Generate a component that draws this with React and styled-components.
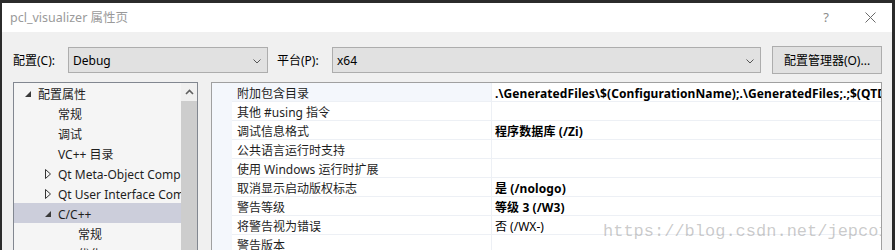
import React from "react";
import styled, { createGlobalStyle } from "styled-components";

const Global = createGlobalStyle`
  html, body { margin: 0; padding: 0; background: #2b2b2b; }
  body { font-family: "Noto Sans", "Noto Sans CJK SC", sans-serif; }
  * { box-sizing: border-box; }
`;

const Frame = styled.div`
  width: 895px;
  height: 250px;
  padding: 3px 3px 0 2px;
  background: #2b2b2b;
  overflow: hidden;
`;

const Window = styled.div`
  height: 247px;
  display: flex;
  flex-direction: column;
  background: #f0f0f0;
  overflow: hidden;
`;

const TitleBar = styled.div`
  flex: none;
  height: 29px;
  background: #fff;
  display: flex;
  align-items: center;
  padding-left: 8px;
`;

const TitleText = styled.div`
  font-size: 12.5px;
  line-height: 18px;
  padding-top: 1px;
  color: #9a9a9a;
  flex: 1;
  white-space: nowrap;
`;

const CaptionButton = styled.div`
  width: 44px;
  height: 29px;
  display: flex;
  align-items: center;
  justify-content: center;
  color: #8c8c8c;
  font-size: 13px;
  line-height: 13px;
`;

const Body = styled.div`
  flex: 1;
  min-height: 0;
  display: flex;
  flex-direction: column;
  padding: 14px 10px 0 11px;
`;

const ConfigRow = styled.div`
  flex: none;
  height: 28px;
  display: flex;
  align-items: center;
`;

const Label = styled.div`
  width: ${(p) => p.$w}px;
  margin-left: ${(p) => p.$ml || 0}px;
  padding-top: 2px;
  font-size: 12px;
  line-height: 16px;
  color: #000;
  white-space: nowrap;
`;

const Combo = styled.div`
  height: 26px;
  ${(p) => (p.$w ? `width: ${p.$w}px;` : "flex: 1;")}
  margin-right: ${(p) => p.$mr || 0}px;
  border: 1px solid #adadad;
  background: #e1e1e1;
  display: flex;
  align-items: center;
  padding: 2px 0 0 4px;
  font-size: 12px;
  line-height: 16px;
  color: #000;
`;

const Chevron = styled.svg`
  margin-left: auto;
  margin-right: 6px;
`;

const Button = styled.div`
  width: 110px;
  height: 28px;
  border: 1px solid #adadad;
  background: #e1e1e1;
  display: flex;
  align-items: center;
  justify-content: center;
  padding-top: 2px;
  font-size: 12px;
  line-height: 16px;
  color: #000;
  white-space: nowrap;
`;

const Main = styled.div`
  flex: none;
  margin-top: 8px;
  display: flex;
  gap: 13px;
  height: 220px;
`;

const Tree = styled.div`
  width: 185px;
  height: 220px;
  border: 1px solid #828790;
  background: #f5f5f5;
  display: flex;
`;

const TreeList = styled.div`
  flex: 1;
  min-width: 0;
  overflow: hidden;
`;

const TreeRow = styled.div`
  height: 20px;
  display: flex;
  align-items: center;
  padding-left: ${(p) => 11 + p.$level * 20}px;
  background: ${(p) => (p.$selected ? "#cccedb" : "transparent")};
  white-space: nowrap;
  font-size: 12px;
  line-height: 16px;
  color: #1e1e1e;
`;

const TreeText = styled.span`
  padding-top: 4px;
`;

const Expander = styled.div`
  width: 13px;
  flex: none;
  display: flex;
  align-items: center;
  padding-top: 1px;
`;

const ScrollBar = styled.div`
  width: 16px;
  flex: none;
  background: #f0f0f0;
  display: flex;
  flex-direction: column;
`;

const ScrollArrow = styled.div`
  height: 18px;
  flex: none;
  display: flex;
  align-items: center;
  justify-content: center;
`;

const ScrollThumb = styled.div`
  flex: 1;
  background: #cdcdcd;
`;

const Grid = styled.div`
  flex: 1;
  height: 220px;
  border: 1px solid #a0a0a0;
  background: #fff;
  display: flex;
  position: relative;
  overflow: hidden;
`;

const Gutter = styled.div`
  width: 20px;
  flex: none;
  background: #f4f7fc;
`;

const Rows = styled.div`
  flex: 1;
  min-width: 0;
`;

const GridRow = styled.div`
  height: 19px;
  display: grid;
  grid-template-columns: 260px 1fr;
  border-bottom: 1px solid #edf0f5;
`;

const NameCell = styled.div`
  padding: 4px 0 0 5px;
  display: flex;
  align-items: center;
  border-right: 1px solid #edf0f5;
  background: ${(p) => (p.$hl ? "#f4f7fc" : "transparent")};
  font-size: 12px;
  line-height: 16px;
  color: #1e1e1e;
  white-space: nowrap;
  overflow: hidden;
`;

const ValueCell = styled.div`
  padding: 4px 0 0 3px;
  display: flex;
  align-items: center;
  font-size: 12px;
  line-height: 16px;
  font-weight: ${(p) => (p.$bold ? 700 : 400)};
  letter-spacing: ${(p) => (p.$bold ? "0.1px" : "0")};
  color: #000;
  white-space: nowrap;
  overflow: hidden;
`;

const Watermark = styled.div`
  position: absolute;
  left: 391px;
  top: 139px;
  font-family: "Liberation Mono", monospace;
  font-size: 17px;
  line-height: 20px;
  color: rgba(140, 140, 140, 0.45);
  white-space: nowrap;
  pointer-events: none;
`;

const ExpandedIcon = () => (
  <svg width="6" height="6" viewBox="0 0 6 6">
    <polygon points="6,0 6,6 0,6" fill="#3a3a3a" />
  </svg>
);

const CollapsedIcon = () => (
  <svg width="6" height="10" viewBox="0 0 6 10">
    <polygon points="0.5,0.5 5.5,5 0.5,9.5" fill="none" stroke="#333" strokeWidth="1" />
  </svg>
);

const treeItems = [
  { level: 0, text: "配置属性", exp: "open" },
  { level: 1, text: "常规" },
  { level: 1, text: "调试" },
  { level: 1, text: "VC++ 目录" },
  { level: 1, text: "Qt Meta-Object Compiler", exp: "closed" },
  { level: 1, text: "Qt User Interface Compiler", exp: "closed" },
  { level: 1, text: "C/C++", exp: "open", selected: true },
  { level: 2, text: "常规" },
  { level: 2, text: "优化" },
  { level: 2, text: "预处理器" },
];

const gridRows = [
  { name: "附加包含目录", value: ".\\GeneratedFiles\\$(ConfigurationName);.\\GeneratedFiles;.;$(QTDIR)\\include;", bold: true, hl: true },
  { name: "其他 #using 指令", value: "" },
  { name: "调试信息格式", value: "程序数据库 (/Zi)", bold: true },
  { name: "公共语言运行时支持", value: "" },
  { name: "使用 Windows 运行时扩展", value: "" },
  { name: "取消显示启动版权标志", value: "是 (/nologo)", bold: true },
  { name: "警告等级", value: "等级 3 (/W3)", bold: true },
  { name: "将警告视为错误", value: "否 (/WX-)" },
  { name: "警告版本", value: "" },
  { name: "SDL 检查", value: "" },
];

const ComboChevron = () => (
  <Chevron width="8" height="5" viewBox="0 0 8 5">
    <path d="M0.5 0.5 L4 4 L7.5 0.5" fill="none" stroke="#555" strokeWidth="1" />
  </Chevron>
);

export default function App() {
  return (
    <Frame>
      <Global />
      <Window>
        <TitleBar>
          <TitleText>pcl_visualizer 属性页</TitleText>
          <CaptionButton>?</CaptionButton>
          <CaptionButton>
            <svg width="11" height="11" viewBox="0 0 11 11">
              <path d="M0.5 0.5 L10.5 10.5 M10.5 0.5 L0.5 10.5" stroke="#6a6a6a" strokeWidth="1" />
            </svg>
          </CaptionButton>
        </TitleBar>
        <Body>
          <ConfigRow>
            <Label $w={55}>配置(C):</Label>
            <Combo $w={200}>
              Debug
              <ComboChevron />
            </Combo>
            <Label $w={55} $ml={9}>平台(P):</Label>
            <Combo $mr={11}>
              x64
              <ComboChevron />
            </Combo>
            <Button>配置管理器(O)...</Button>
          </ConfigRow>
          <Main>
            <Tree>
              <TreeList>
                {treeItems.map((it, i) => (
                  <TreeRow key={i} $level={it.level} $selected={it.selected}>
                    <Expander>
                      {it.exp === "open" && <ExpandedIcon />}
                      {it.exp === "closed" && <CollapsedIcon />}
                    </Expander>
                    <TreeText>{it.text}</TreeText>
                  </TreeRow>
                ))}
              </TreeList>
              <ScrollBar>
                <ScrollArrow>
                  <svg width="9" height="6" viewBox="0 0 9 6">
                    <path d="M1 5 L4.5 1.5 L8 5" fill="none" stroke="#606060" strokeWidth="1.6" />
                  </svg>
                </ScrollArrow>
                <ScrollThumb />
              </ScrollBar>
            </Tree>
            <Grid>
              <Gutter />
              <Rows>
                {gridRows.map((r, i) => (
                  <GridRow key={i}>
                    <NameCell $hl={r.hl}>{r.name}</NameCell>
                    <ValueCell $bold={r.bold}>{r.value}</ValueCell>
                  </GridRow>
                ))}
              </Rows>
              <Watermark>https://blog.csdn.net/jepco1</Watermark>
            </Grid>
          </Main>
        </Body>
      </Window>
    </Frame>
  );
}
